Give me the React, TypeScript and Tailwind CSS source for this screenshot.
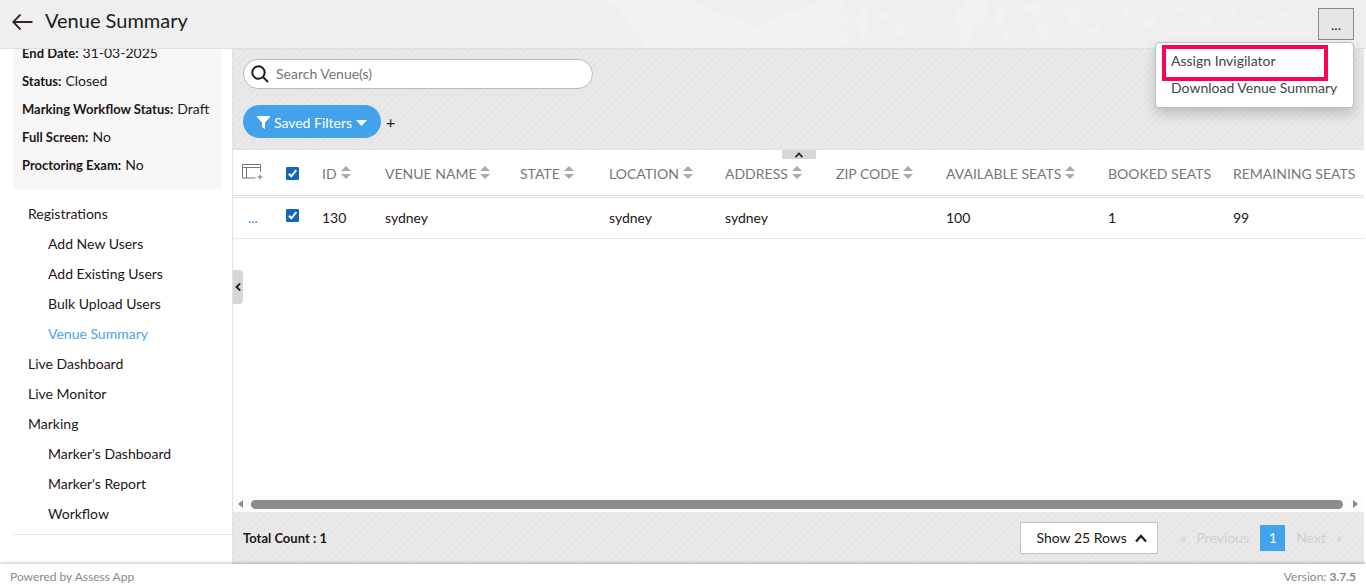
import { useState } from 'react';
import type { ReactNode } from 'react';

interface Column {
  label: string;
  width: string;
  sortable: boolean;
}

interface NavItem {
  label: string;
  nested?: boolean;
  active?: boolean;
}

const details = [
  { label: 'End Date', value: '31-03-2025' },
  { label: 'Status', value: 'Closed' },
  { label: 'Marking Workflow Status', value: 'Draft' },
  { label: 'Full Screen', value: 'No' },
  { label: 'Proctoring Exam', value: 'No' },
];

const navItems: NavItem[] = [
  { label: 'Registrations' },
  { label: 'Add New Users', nested: true },
  { label: 'Add Existing Users', nested: true },
  { label: 'Bulk Upload Users', nested: true },
  { label: 'Venue Summary', nested: true, active: true },
  { label: 'Live Dashboard' },
  { label: 'Live Monitor' },
  { label: 'Marking' },
  { label: "Marker's Dashboard", nested: true },
  { label: "Marker's Report", nested: true },
  { label: 'Workflow', nested: true },
];

const columns: Column[] = [
  { label: 'ID', width: 'w-[63px]', sortable: true },
  { label: 'VENUE NAME', width: 'w-[135px]', sortable: true },
  { label: 'STATE', width: 'w-[89px]', sortable: true },
  { label: 'LOCATION', width: 'w-[116px]', sortable: true },
  { label: 'ADDRESS', width: 'w-[111px]', sortable: true },
  { label: 'ZIP CODE', width: 'w-[110px]', sortable: true },
  { label: 'AVAILABLE SEATS', width: 'w-[162px]', sortable: true },
  { label: 'BOOKED SEATS', width: 'w-[125px]', sortable: false },
  { label: 'REMAINING SEATS', width: 'w-[140px]', sortable: false },
];

const rows = [['130', 'sydney', '', 'sydney', 'sydney', '', '100', '1', '99']];

// Diagonal hatch shared by the toolbar and the table footer
function Striped({ className, children }: { className: string; children: ReactNode }) {
  return (
    <div
      className={`bg-[#e9e9e9] bg-[linear-gradient(135deg,transparent_45%,#dfdfdf_45%,#dfdfdf_55%,transparent_55%)] bg-size-[7px_7px] ${className}`}
    >
      {children}
    </div>
  );
}

function SortIcon() {
  return (
    <svg width="10" height="13" viewBox="0 0 10 13" fill="#aaaaaa" aria-hidden="true">
      <path d="M5 0l5 5H0z" />
      <path d="M5 13l5-5H0z" />
    </svg>
  );
}

function Check({ label }: { label: string }) {
  const [checked, setChecked] = useState(true);
  return (
    <span className="relative block w-[13px] h-[13px]">
      <input
        type="checkbox"
        aria-label={label}
        checked={checked}
        onChange={() => setChecked(!checked)}
        className="block w-[13px] h-[13px] appearance-none rounded-[1px] border border-[#1266bb] checked:bg-[#1266bb]"
      />
      {checked && (
        <svg
          className="absolute inset-0 pointer-events-none"
          width="13"
          height="13"
          viewBox="0 0 13 13"
          fill="none"
          stroke="#fff"
          strokeWidth="2"
        >
          <path d="M2.8 6.8l2.5 2.5 5-6.2" />
        </svg>
      )}
    </span>
  );
}

function Header() {
  return (
    <header className="relative z-10 h-[49px] shrink-0 flex items-start justify-between px-3 pt-2 bg-[#efefef] border-b border-[#e0e0e0]">
      <svg
        className="absolute inset-0 w-full h-full"
        viewBox="0 0 1366 48"
        preserveAspectRatio="none"
        fill="#f2f2f2"
        aria-hidden="true"
      >
        <path d="M604 0Q620 8 626 18L646 48H840L852 38 836 30 850 22 838 12 846 0H816Q808 12 790 10 768 18 758 28 744 18 720 14L692 0z" />
        <path d="M862 4l6 6-4 8 6 4-6 10 4 10-8-6-4-14 4-8zM880 14l8-4 2 8-8 4zM892 30l8-6 4 8-10 6z" />
        <path d="M958 10l10-10h18l4 8-6 14-12 6-4 20h-8l2-18-8-6zM994 12l10-6 2 12-10 8zM1000 32l12-4-6 16z" />
        <path d="M1024 8l12-8 8 10-8 8zM1036 26l10-6 4 12-8 10zM1064 12l12-6 8 12-12 6zM1088 28l12-2-4 12zM1120 4l14 6-10 6zM1142 20l12-4 2 8-12 4z" />
        <path d="M1170 8l10-4 4 8zM1196 22l12-8 4 6-12 8zM1224 10l14-4-4 8zM1250 26l10-8 4 6zM1280 10l12 4-8 6z" />
      </svg>
      <div className="relative flex items-center gap-3 h-7">
        <button type="button" aria-label="Back" className="block">
          <svg width="21" height="18" viewBox="0 0 21 18" fill="none" stroke="#3a2525" strokeWidth="1.8">
            <path d="M1 9h19.500M8.500 1.500L1.200 9l7.300 7.500" />
          </svg>
        </button>
        <h1 className="pb-1 text-xl leading-6 text-[#231a1a]">Venue Summary</h1>
      </div>
      <div className="relative">
        <button
          type="button"
          aria-label="More actions"
          aria-expanded="true"
          className="block w-9 h-8 bg-[#e5e6e6] border border-[#8a8a8a] text-sm leading-8 text-[#222]"
        >
          ...
        </button>
        <div className="absolute right-0 top-full mt-0.5 w-[199px] pt-1 pb-1.5 bg-white border border-[#bdbdbd] rounded shadow-[0_6px_12px_rgba(0,0,0,0.18)]">
          <button type="button" className="block w-full h-[27px] pl-[15px] text-left whitespace-nowrap text-[#444]">
            Assign Invigilator
          </button>
          <button type="button" className="block w-full h-[27px] pl-[15px] text-left whitespace-nowrap text-[#444]">
            Download Venue Summary
          </button>
          <span className="absolute left-1.5 top-0.5 w-[166px] h-9 border-4 border-[#fb0350] pointer-events-none" />
        </div>
      </div>
    </header>
  );
}

function Sidebar() {
  return (
    <aside className="w-[233px] shrink-0 pl-[13px] border-r border-[#e2e2e2] overflow-hidden">
      <dl className="-mt-2.5 mr-2.5 pl-[9px] pb-2.5 bg-[#f7f7f7]">
        {details.map((item) => (
          <div key={item.label} className="flex items-center gap-1 h-7 whitespace-nowrap">
            <dt className="text-[13px] font-bold">{item.label}:</dt>
            <dd>{item.value}</dd>
          </div>
        ))}
      </dl>
      <nav className="pt-2.5 pb-[5px] border-b border-[#e8e8e8]">
        <ul>
          {navItems.map((item) => (
            <li key={item.label} className={item.nested ? 'pl-[35px]' : 'pl-[15px]'}>
              <a href="#" className={`block leading-[30px] ${item.active ? 'text-[#4ba3e8]' : ''}`}>
                {item.label}
              </a>
            </li>
          ))}
        </ul>
      </nav>
    </aside>
  );
}

function Toolbar() {
  return (
    <Striped className="h-[101px] shrink-0 pt-2.5 pl-2.5 border-b border-[#e0e0e0]">
      <label className="flex items-center gap-[7px] w-[350px] h-[30px] pl-[7px] bg-white border border-[#bbb] rounded-full">
        <svg width="18" height="18" viewBox="0 0 18 18" fill="none" stroke="#231a1a" strokeWidth="2">
          <circle cx="7.500" cy="7.500" r="6.200" />
          <path d="M12 12l5 5" />
        </svg>
        <input
          type="search"
          aria-label="Search venues"
          placeholder="Search Venue(s)"
          className="flex-1 outline-none placeholder:text-[#757575]"
        />
      </label>
      <div className="flex items-center gap-[5px] mt-4">
        <button
          type="button"
          className="flex items-center justify-center gap-1 w-[138px] h-[33px] pt-0.5 bg-[#43a2ec] text-white rounded-full"
        >
          <svg width="13" height="13" viewBox="0 0 13 13" fill="#fff">
            <path d="M0 0h13v1L8 6.500V13L5 11V6.500L0 1z" />
          </svg>
          <span>Saved Filters</span>
          <svg width="11" height="6" viewBox="0 0 11 6" fill="#fff">
            <path d="M0 0h11L5.500 6z" />
          </svg>
        </button>
        <button type="button" aria-label="Add filter" className="text-base text-[#222]">
          +
        </button>
      </div>
    </Striped>
  );
}

function VenueTable() {
  return (
    <div className="relative flex-1 min-h-0 overflow-hidden bg-white">
      <table className="table-fixed w-full min-w-[1120px] border-collapse text-left whitespace-nowrap">
        <thead>
          <tr className="h-[46px] border-b-3 border-double border-[#e0e0e0] text-[#777]">
            <th className="w-[53px] pl-[9px]">
              <button type="button" aria-label="Choose columns" className="block">
                <svg width="21" height="18" viewBox="0 0 21 18" fill="none" stroke="#777" aria-hidden="true">
                  <path d="M18.500 9V1.500H0.500v13.500h13M0.500 4.500h18M4.500 4.500v10.500M18 11.500v5M15.500 14h5" />
                </svg>
              </button>
            </th>
            <th className="w-9 pt-0.5">
              <Check label="Select all venues" />
            </th>
            {columns.map((col) => (
              <th key={col.label} className={`font-normal ${col.width}`}>
                <span className="flex items-start gap-1">
                  <span className="pt-1">{col.label}</span>
                  {col.sortable && (
                    <span className="pt-1.5">
                      <SortIcon />
                    </span>
                  )}
                </span>
              </th>
            ))}
          </tr>
        </thead>
        <tbody>
          {rows.map((row) => (
            <tr key={row[0]} className="h-[42px] border-b border-[#e8e8e8]">
              <td className="pl-[15px]">
                <button type="button" aria-label="Row actions" className="text-[#2a8be0]">
                  ...
                </button>
              </td>
              <td className="pb-1">
                <Check label="Select venue" />
              </td>
              {row.map((cell, index) => (
                <td key={index}>{cell}</td>
              ))}
            </tr>
          ))}
        </tbody>
      </table>
      <button
        type="button"
        aria-label="Collapse toolbar"
        className="absolute top-0 left-1/2 -translate-x-1/2 flex items-center justify-center w-[34px] h-[9px] bg-[#d6d7d8]"
      >
        <svg width="8" height="6" viewBox="0 0 8 6" fill="none" stroke="#231a1a" strokeWidth="1.800">
          <path d="M0.500 5.200L4 1.500l3.500 3.700" />
        </svg>
      </button>
      <button
        type="button"
        aria-label="Collapse sidebar"
        className="absolute top-[120px] left-0 flex items-center justify-center w-2.5 h-[34px] bg-[#d6d7d8] rounded-r-sm"
      >
        <svg width="6" height="8" viewBox="0 0 6 8" fill="none" stroke="#231a1a" strokeWidth="1.800">
          <path d="M5.200 0.500L1.500 4l3.700 3.500" />
        </svg>
      </button>
    </div>
  );
}

function ScrollTrack() {
  return (
    <div className="flex items-center h-4 shrink-0 px-[5px] bg-[#fcfcfc]">
      <svg width="6" height="10" viewBox="0 0 6 10" fill="#8b8b8b">
        <path d="M5 1v8L0 5z" />
      </svg>
      <div className="flex-1 h-[9px] ml-[7px] mr-2.5 bg-[#8b8b8b] rounded-full" />
      <svg width="6" height="10" viewBox="0 0 6 10" fill="#8b8b8b">
        <path d="M0 1v8l5-4z" />
      </svg>
    </div>
  );
}

function TableFooter() {
  return (
    <Striped className="flex items-center justify-between h-[52px] shrink-0 pl-2.5 pr-[22px]">
      <p className="text-[13px] font-bold">Total Count : 1</p>
      <div className="flex items-center">
        <div className="relative">
          <select
            aria-label="Rows per page"
            className="block w-[138px] h-8 pl-[15px] appearance-none bg-white border border-[#c4c4c4]"
          >
            <option>Show 25 Rows</option>
          </select>
          <svg
            className="absolute right-[11px] top-3 pointer-events-none"
            width="12"
            height="9"
            viewBox="0 0 12 9"
            fill="none"
            stroke="#231a1a"
            strokeWidth="2.200"
          >
            <path d="M1 7.500L6 2l5 5.500" />
          </svg>
        </div>
        <nav aria-label="Pages" className="flex items-center ml-[22px] text-[#cfcfcf]">
          <button type="button" disabled className="flex gap-2.5">
            <span>«</span>
            <span>Previous</span>
          </button>
          <button type="button" aria-current="page" className="w-[25px] h-[26px] mx-[11px] bg-[#43a2ec] text-white">
            1
          </button>
          <button type="button" disabled className="flex gap-2.5">
            <span>Next</span>
            <span>»</span>
          </button>
        </nav>
      </div>
    </Striped>
  );
}

export default function App() {
  return (
    <div className="flex flex-col h-screen bg-white font-['Lato',sans-serif] text-[14px] leading-5 text-[#1d1616]">
      <Header />
      <div className="flex flex-1 min-h-0">
        <Sidebar />
        <main className="flex flex-col flex-1 min-w-0 mr-0.5">
          <Toolbar />
          <VenueTable />
          <ScrollTrack />
          <TableFooter />
        </main>
      </div>
      <footer className="relative flex items-end justify-between h-[22px] shrink-0 px-2.5 bg-white text-xs leading-[18px] text-[#8a8a8a] shadow-[0_-1px_3px_rgba(0,0,0,0.25)]">
        <span>Powered by Assess App</span>
        <span>
          Version: <b>3.7.5</b>
        </span>
      </footer>
    </div>
  );
}
